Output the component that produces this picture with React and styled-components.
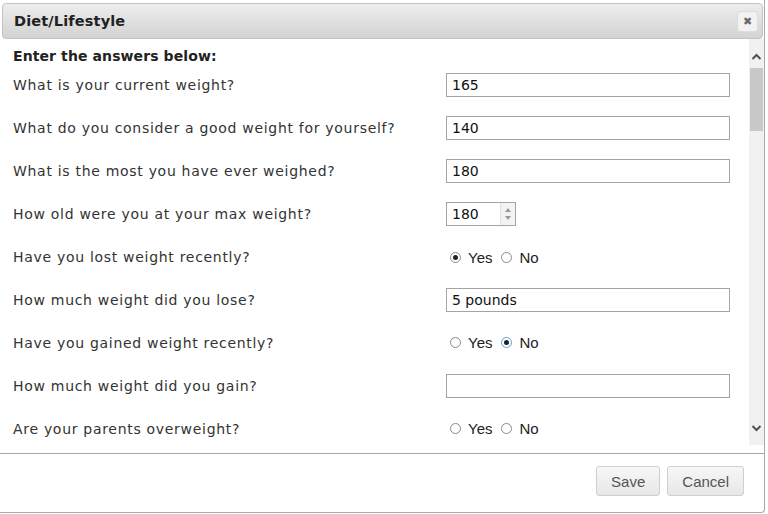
import React from "react";
import styled, { createGlobalStyle } from "styled-components";

const Global = createGlobalStyle`
  html, body { margin: 0; padding: 0; background: #fff; }
  body { font-family: "DejaVu Sans", Verdana, sans-serif; overflow: hidden; }
  * { box-sizing: border-box; }
`;

const Dialog = styled.div`
  width: 766px;
  height: 513px;
  margin-left: -1px;
  padding: 3px 1px 0 3px;
  border-right: 1px solid #a8a8a8;
  border-bottom: 1px solid #a8a8a8;
  border-bottom-right-radius: 4px;
  background: #fff;
  display: flex;
  flex-direction: column;
`;

const TitleBar = styled.div`
  height: 36px;
  border: 1px solid #c2c2c2;
  border-radius: 4px;
  background: linear-gradient(#ededed, #d3d3d3);
  display: flex;
  align-items: center;
  justify-content: space-between;
  padding: 0 4px 0 11px;
`;

const Title = styled.span`
  font-weight: bold;
  font-size: 14.5px;
  letter-spacing: 0.15px;
  color: #222;
`;

const CloseButton = styled.button`
  width: 21px;
  height: 21px;
  padding: 0;
  border: 1px solid #dcdcdc;
  border-radius: 3px;
  background: #f2f2f2;
  color: #6a6a6a;
  font-family: "DejaVu Sans", sans-serif;
  font-weight: bold;
  font-size: 11px;
  line-height: 19px;
  display: flex;
  align-items: center;
  justify-content: center;
`;

const ContentPane = styled.div`
  height: 415px;
  display: flex;
  padding-bottom: 8px;
  border-bottom: 1px solid #a8a8a8;
  margin: 0 -1px 0 -3px;
  padding-left: 3px;
`;

const Scroll = styled.div`
  flex: 1;
  overflow: hidden;
  padding: 8px 0 0 11px;
`;

const Heading = styled.div`
  font-weight: bold;
  font-size: 14px;
  line-height: 18px;
  letter-spacing: 0.1px;
  color: #222;
`;

const Form = styled.div`
  display: grid;
  grid-template-columns: 433px 284px;
  grid-auto-rows: 42.9px;
  align-items: center;
  margin-top: -1px;
`;

const Label = styled.div`
  font-size: 14px;
  letter-spacing: 0.7px;
  color: #333;
`;

const TextBox = styled.div`
  width: ${(p) => p.$w || 284}px;
  height: 24px;
  border: 1px solid #a5a5a5;
  padding: 0 5px;
  font-size: 14px;
  line-height: 22px;
  color: #111;
  display: flex;
  align-items: center;
  justify-content: space-between;
`;

const Spin = styled.div`
  width: 15px;
  height: 22px;
  margin-right: -5px;
  border-left: 1px solid #e2e2e2;
  background: #f3f3f3;
  display: flex;
  flex-direction: column;
  align-items: center;
  justify-content: center;
  gap: 4px;
`;

const Tri = styled.span`
  width: 0;
  height: 0;
  border-left: 3px solid transparent;
  border-right: 3px solid transparent;
  ${(p) => (p.$down ? "border-top: 4px solid #999;" : "border-bottom: 4px solid #999;")}
`;

const RadioGroup = styled.div`
  display: flex;
  align-items: center;
  padding-left: 4px;
  font-family: "Liberation Sans", Arial, sans-serif;
  font-size: 15px;
  color: #222;
`;

const Option = styled.label`
  display: flex;
  align-items: center;
  gap: 7px;
  margin-right: 9px;
`;

const Circle = styled.span`
  width: 11px;
  height: 11px;
  border-radius: 50%;
  border: 1px solid ${(p) => (p.$focus ? "#5a9fd6" : "#8a8a8a")};
  background: #fff;
  display: flex;
  align-items: center;
  justify-content: center;
  &::after {
    content: "";
    width: 5px;
    height: 5px;
    border-radius: 50%;
    background: ${(p) => (p.$on ? "#222" : "transparent")};
  }
`;

const ScrollBar = styled.div`
  width: 15px;
  background: #f1f1f1;
  display: flex;
  flex-direction: column;
  align-items: center;
  margin-left: 1px;
`;

const Arrow = styled.div`
  height: 17px;
  width: 15px;
  display: flex;
  align-items: center;
  justify-content: center;
  margin-top: ${(p) => p.$mt || 0}px;
  margin-bottom: ${(p) => p.$mb || 0}px;
`;

const Thumb = styled.div`
  width: 13px;
  height: 63px;
  background: #c8c8c8;
  margin-top: 3px;
`;

const Spacer = styled.div`
  flex: 1;
`;

const Footer = styled.div`
  flex: 1;
  display: flex;
  justify-content: flex-end;
  align-items: flex-start;
  gap: 7px;
  padding: 12px 19px 0 0;
`;

const Button = styled.button`
  height: 30px;
  padding: 0 ${(p) => p.$px}px;
  border: 1px solid #cfcfcf;
  border-radius: 3px;
  background: linear-gradient(#f7f7f7, #e7e7e7);
  font-family: "Liberation Sans", Arial, sans-serif;
  font-size: 15px;
  color: #555;
`;

const Chevron = ({ down }) => (
  <svg width="11" height="8" viewBox="0 0 11 8">
    <path
      d={down ? "M1.5 2 L5.5 6 L9.5 2" : "M1.5 6 L5.5 2 L9.5 6"}
      fill="none"
      stroke="#505050"
      strokeWidth="2"
    />
  </svg>
);

const Radio = ({ value }) => (
  <RadioGroup>
    <Option>
      <Circle $on={value === "yes"} />
      Yes
    </Option>
    <Option>
      <Circle $on={value === "no"} $focus={value === "no"} />
      No
    </Option>
  </RadioGroup>
);

const rows = [
  ["What is your current weight?", { t: "text", v: "165" }],
  ["What do you consider a good weight for yourself?", { t: "text", v: "140" }],
  ["What is the most you have ever weighed?", { t: "text", v: "180" }],
  ["How old were you at your max weight?", { t: "spin", v: "180" }],
  ["Have you lost weight recently?", { t: "radio", v: "yes" }],
  ["How much weight did you lose?", { t: "text", v: "5 pounds" }],
  ["Have you gained weight recently?", { t: "radio", v: "no" }],
  ["How much weight did you gain?", { t: "text", v: "" }],
  ["Are your parents overweight?", { t: "radio", v: "" }],
];

const Control = ({ c }) => {
  if (c.t === "text") return <TextBox>{c.v}</TextBox>;
  if (c.t === "spin")
    return (
      <TextBox $w={70}>
        {c.v}
        <Spin>
          <Tri />
          <Tri $down />
        </Spin>
      </TextBox>
    );
  return <Radio value={c.v} />;
};

export default function App() {
  return (
    <>
      <Global />
      <Dialog>
        <TitleBar>
          <Title>Diet/Lifestyle</Title>
          <CloseButton aria-label="close">✖</CloseButton>
        </TitleBar>
        <ContentPane>
          <Scroll>
            <Heading>Enter the answers below:</Heading>
            <Form>
              {rows.map(([q, c]) => (
                <React.Fragment key={q}>
                  <Label>{q}</Label>
                  <Control c={c} />
                </React.Fragment>
              ))}
            </Form>
          </Scroll>
          <ScrollBar>
            <Arrow $mt={9}>
              <Chevron />
            </Arrow>
            <Thumb />
            <Spacer />
            <Arrow $mb={9}>
              <Chevron down />
            </Arrow>
          </ScrollBar>
        </ContentPane>
        <Footer>
          <Button $px={14}>Save</Button>
          <Button $px={14}>Cancel</Button>
        </Footer>
      </Dialog>
    </>
  );
}
